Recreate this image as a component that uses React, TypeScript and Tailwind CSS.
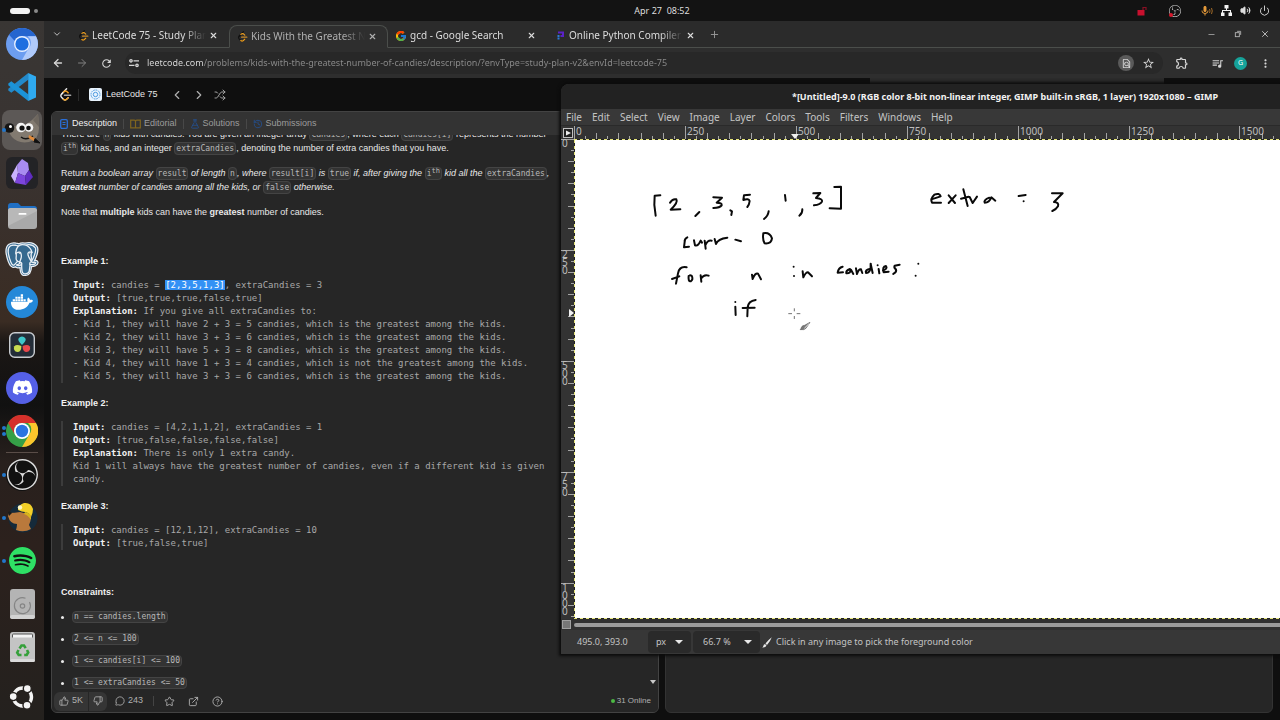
import React from 'react';
import {
    ArrowLeft, ArrowRight, ChevronDown, ChevronLeft, ChevronRight, CircleHelp, ExternalLink, FlaskConical,
    History, MessageCircle, Minus, Plus, Power, Shuffle, Star, ThumbsDown, ThumbsUp, Volume2, X,
} from 'lucide-react';
import { FaDiscord, FaDocker } from 'react-icons/fa';
import { FcGoogle } from 'react-icons/fc';
import { MdMic, MdOutlineExtension, MdOutlineFindInPage, MdQueueMusic, MdRefresh, MdMoreVert, MdStarBorder } from 'react-icons/md';
import { BiLogoPostgresql } from 'react-icons/bi';
import { SiObsstudio, SiSpotify } from 'react-icons/si';

const UI_FONT = "font-['Noto_Sans','Liberation_Sans',sans-serif]";
const PAGE_FONT = "font-['Liberation_Sans',Arial,sans-serif]";
const MONO_FONT = "font-['DejaVu_Sans_Mono','Liberation_Mono',monospace]";

const LeetCodeLogo = ({ size, light }: { size: number; light?: boolean }) => (
    <svg width={size} height={size} viewBox="0 0 24 24" fill="none" strokeWidth="2.6" strokeLinecap="round">
        <path d="M14 1.5 4.5 11.5" stroke={light ? '#e8e8e8' : '#111'} />
        <path d="M8 8 4.6 11.6q-2.4 2.6 0 5.4l3.6 3.8q2.9 2.6 5.8 0l3-3" stroke={light ? '#e8e8e8' : '#111'} />
        <path d="m17 9-3-2.8q-2.500-1.800-5.500 1.200M8.200 20.800q2.900 2.600 5.800 0l3-3" stroke="#f0a020" />
        <path d="M10 13.5h11.5" stroke={light ? '#a8a8a8' : '#c98a2a'} />
    </svg>
);

const ChromiumIcon = () => (
    <svg width="32" height="32" viewBox="0 0 32 32">
        <circle cx="16" cy="16" r="16" fill="#6c9df0" />
        <path d="M16 0a16 16 0 0 1 14 8.3H16A7.8 7.8 0 0 0 8.8 13L3 6.7A16 16 0 0 1 16 0Z" fill="#2565cf" />
        <path d="M30 8.3A16 16 0 0 1 16 32l6.7-12a7.8 7.8 0 0 0-1-11.7Z" fill="#b0cafa" />
        <circle cx="16" cy="16" r="8" fill="#e8f0ff" />
        <circle cx="16" cy="16" r="6.6" fill="#1f6fe0" />
    </svg>
);

const ChromeIcon = () => (
    <svg width="32" height="32" viewBox="0 0 32 32">
        <circle cx="16" cy="16" r="16" fill="#35a047" />
        <path d="M2.1 8A16 16 0 0 1 30 8H16a8 8 0 0 0-7 12Z" fill="#d5302b" />
        <path d="M30 8A16 16 0 0 1 16 32l7-12a8 8 0 0 0-1-12Z" fill="#fbc52c" />
        <circle cx="16" cy="16" r="8" fill="#fff" />
        <circle cx="16" cy="16" r="6.2" fill="#2a74e0" />
    </svg>
);

const VsCodeIcon = () => (
    <svg width="28" height="28" viewBox="0 0 28 28">
        <path d="M20.5 6.5 3.3 19.8.3 17.6v-1.8L20.3 0Z" fill="#2389ca" />
        <path d="M20.5 21.5 3.3 8.2.3 10.4v1.8L20.3 28Z" fill="#1b93d8" />
        <path d="M20.2 0 28 3.6v20.8L20.2 28Z" fill="#2faaf0" />
    </svg>
);

const GimpIcon = () => (
    <svg width="36" height="34" viewBox="0 0 36 34">
        <path d="M4 13q10 1 17-1 7-4 13-11 1 9 1 14 0 12-10 14-11 2-17-5-4-5-4-11Z" fill="#827a70" />
        <path d="M29 7q3-3 5-6 1 8 1 13Z" fill="#6d665e" />
        <circle cx="5.500" cy="15" r="4.800" fill="#151515" />
        <circle cx="17" cy="14.500" r="4.800" fill="#f4f4f4" />
        <circle cx="25" cy="14.500" r="4.300" fill="#f4f4f4" />
        <circle cx="18" cy="15" r="2.600" fill="#111" />
        <circle cx="24.500" cy="15" r="2.300" fill="#111" />
        <circle cx="6.500" cy="13.500" r="1.500" fill="#fff" />
        <path d="M17 24q5 4 12-1" stroke="#151515" strokeWidth="1.500" fill="none" />
        <path d="m25 22 7 4-1.500 2.500-6-3.500Z" fill="#e08a3a" />
        <path d="m31 25.500 5 4.500-6-1Z" fill="#111" stroke="#111" />
    </svg>
);

const ObsidianIcon = () => (
    <svg width="32" height="32" viewBox="0 0 32 32">
        <rect width="32" height="32" rx="6" fill="#232326" />
        <path d="m16 2 6 4 1 7-4 6-7-3-1-8Z" fill="#a88bf0" />
        <path d="m11 8 1 8-3 10-4-7Z" fill="#c9b2ff" />
        <path d="m12 16 7 3 1 9-11-2Z" fill="#7c45dc" />
        <path d="m23 13 4 7-7 8-1-9Z" fill="#5f2cc0" />
    </svg>
);

const FilesIcon = () => (
    <svg width="31" height="28" viewBox="0 0 31 28">
        <path d="M1 4q0-3 3-3h7l3 3h13q3 0 3 3v9H1Z" fill="#1f6fc4" />
        <rect x="1" y="6" width="29" height="21" rx="3" fill="#a9a9a9" />
        <path d="M1 24v-15q0-3 3-3h23q3 0 3 3Z" fill="#b8b8b8" />
        <rect x="11.500" y="11" width="8" height="1.800" rx="0.900" fill="#fff" />
    </svg>
);

const PostgresIcon = () => (
    <BiLogoPostgresql size={38} className="shrink-0 text-[#35698f] [paint-order:stroke]" stroke="#e8eef4" strokeWidth={1.6} />
);

const DockerIcon = () => (
    <span className="flex size-8 items-center justify-center rounded-full bg-[#2488d8] text-white">
        <FaDocker size={22} />
    </span>
);

const ResolveIcon = () => (
    <svg width="26" height="26" viewBox="0 0 26 26">
        <rect x="0.700" y="0.700" width="24.600" height="24.600" rx="5" fill="#232d38" stroke="#c8ccd0" strokeWidth="1.400" />
        <path d="M13 13Q8 8.500 9.700 6.300a4 4 0 0 1 6.600 0Q18 8.500 13 13Z" fill="#3ec6c9" />
        <path d="M12.400 14q0 6-4 6a3.800 3.800 0 0 1-3-5.800q2-2.400 7-.2Z" fill="#c9dc50" />
        <path d="M13.600 14q5-2.200 7 .2a3.800 3.800 0 0 1-3 5.800q-4 0-4-6Z" fill="#e8484c" />
    </svg>
);

const DiscordIcon = () => (
    <span className="flex size-8 items-center justify-center rounded-full bg-[#5560e6] text-white">
        <FaDiscord size={21} />
    </span>
);

const ObsIcon = () => (
    <span className="flex size-8 items-center justify-center rounded-full bg-[#111] text-[#dcdcdc]">
        <SiObsstudio size={31} />
    </span>
);

const BeaverIcon = () => (
    <svg width="32" height="32" viewBox="0 0 32 32">
        <circle cx="17" cy="16" r="14.500" fill="#152a3a" />
        <path d="M3 11q6 0 11-1l11 3q0 6-2 10 1 2 2 4-7 4-15 1 1-3 1-6-7 0-9-8Z" fill="#b9793c" />
        <path d="M2 10q2-1 4 1l-3 3Z" fill="#1c1c1c" />
        <path d="M12 8q0-5 6-7 7-1 9 6 0 4-2 8-1-4-6-5-3 0-7-2Z" fill="#f2cf28" />
        <circle cx="14" cy="5.500" r="2.200" fill="#fbf6c8" />
        <path d="M19 10q6 1 6 5v3q-3-5-7-6Z" fill="#d8b41c" />
    </svg>
);

const SpotifyIcon = () => (
    <span className="flex size-[27px] items-center justify-center rounded-full bg-[#111] text-[#2fe065]">
        <SiSpotify size={27} />
    </span>
);

const DiskIcon = () => (
    <svg width="25" height="30" viewBox="0 0 25 30">
        <rect width="25" height="30" rx="3" fill="#b4b4b4" />
        <rect y="26" width="25" height="4" rx="2" fill="#d2d2d2" />
        <path d="M19.500 13a8 8 0 1 1-4-3.700" fill="none" stroke="#858585" strokeWidth="1.200" />
        <circle cx="12.500" cy="17" r="2.200" fill="none" stroke="#858585" strokeWidth="1.200" />
    </svg>
);

const TrashIcon = () => (
    <svg width="25" height="30" viewBox="0 0 25 30">
        <rect width="25" height="30" rx="3" fill="#c4c4c4" />
        <path d="M2.500 5.500V3q0-1 1-1h18q1 0 1 1v2.500" fill="#f4f4f4" stroke="#555" strokeWidth="1" />
        <rect y="27" width="25" height="3" rx="1.500" fill="#dadada" />
        <g fill="none" stroke="#35a03a" strokeWidth="2.600">
            <path d="m9.500 16.500 2-3h2.500l1.700 2.600" />
            <path d="m17 18 1.200 2.500-1.500 2.500h-2.500" />
            <path d="M11.500 23H8.700l-1.500-2.400L8.500 18" />
        </g>
    </svg>
);

const UbuntuIcon = () => (
    <svg width="26" height="26" viewBox="0 0 26 26">
        <circle cx="13.500" cy="13" r="9" fill="none" stroke="#f4f4f4" strokeWidth="3.400" />
        <g fill="#f4f4f4" stroke="#24201d" strokeWidth="1.400">
            <circle cx="4.200" cy="12.600" r="4" />
            <circle cx="18.300" cy="4.600" r="4" />
            <circle cx="18" cy="21.300" r="4" />
        </g>
    </svg>
);

const dockApps = [
    { name: 'Chromium', icon: <ChromiumIcon />, dots: 0 },
    { name: 'Code', icon: <VsCodeIcon />, dots: 0 },
    { name: 'GIMP', icon: <GimpIcon />, dots: 1, active: true },
    { name: 'Obsidian', icon: <ObsidianIcon />, dots: 0 },
    { name: 'Files', icon: <FilesIcon />, dots: 0 },
    { name: 'PostgreSQL', icon: <PostgresIcon />, dots: 0 },
    { name: 'Docker', icon: <DockerIcon />, dots: 0 },
    { name: 'DaVinci Resolve', icon: <ResolveIcon />, dots: 0 },
    { name: 'Discord', icon: <DiscordIcon />, dots: 0 },
    { name: 'Chrome', icon: <ChromeIcon />, dots: 2 },
];

const runningApps = [
    { name: 'OBS Studio', icon: <ObsIcon />, dots: 1 },
    { name: 'DBeaver', icon: <BeaverIcon />, dots: 1 },
    { name: 'Spotify', icon: <SpotifyIcon />, dots: 1 },
    { name: 'Disk', icon: <DiskIcon />, dots: 0 },
    { name: 'Trash', icon: <TrashIcon />, dots: 0 },
];

interface DockItemProps {
    name: string;
    icon: React.ReactNode;
    dots: number;
    active?: boolean;
}

const DockItem: React.FC<DockItemProps> = ({ name, icon, dots, active }) => (
    <li className="relative flex h-[43px] items-center justify-center">
        <button aria-label={name} className={`flex size-10 items-center justify-center rounded-lg ${active ? 'bg-[#5c5856]' : ''}`}>
            {icon}
        </button>
        <span className="absolute left-0.5 flex flex-col gap-0.5">
            {Array.from({ length: dots }).map((_, i) => (
                <span key={i} className="size-1 rounded-full bg-[#2277cc]"></span>
            ))}
        </span>
    </li>
);

const Dock = () => (
    <nav className="flex w-11 shrink-0 flex-col bg-[linear-gradient(180deg,#393634_0%,#393331_20%,#3a2c23_43%,#1b1715_46%,#111_55%,#28201d_63%,#2c211d_75%,#24211e_100%)] pt-px pb-0.5">
        <ul>
            {dockApps.map(app => <DockItem key={app.name} {...app} />)}
        </ul>
        <hr className="mx-1.5 border-[#5a4d48]" />
        <ul>
            {runningApps.map(app => <DockItem key={app.name} {...app} />)}
        </ul>
        <button aria-label="Show apps" className="mt-auto flex h-[43px] items-center justify-center">
            <UbuntuIcon />
        </button>
    </nav>
);

const TopBar = () => (
    <header className="relative flex h-[21px] shrink-0 items-center justify-between bg-[#131313] px-2.5 text-[#dedede]">
        <div className="flex items-center gap-1">
            <span className="h-1.5 w-5 rounded-full bg-[#f2f2f2]"></span>
            <span className="size-1 rounded-full bg-[#8a8a8a]"></span>
        </div>
        <time className="absolute inset-x-0 pl-11 text-center text-[9px] whitespace-pre">Apr 27  08:52</time>
        <div className="flex items-center gap-2">
            <svg width="10" height="10" viewBox="0 0 10 10" className="mr-3.5">
                <rect x="0.500" y="4" width="7" height="5.500" fill="#c8102e" />
                <path d="M6 4V1.500h3V4" fill="none" stroke="#8a1024" strokeWidth="1.200" />
            </svg>
            <span className="relative mr-2.5">
                <SiObsstudio size={12} />
                <span className="absolute bottom-0 left-0 size-1 rounded-full bg-[#d8182c]"></span>
            </span>
            <span className="flex items-center text-[#e59a3a]">
                <MdMic size={12} />
                <svg width="4" height="8" viewBox="0 0 4 8" className="-ml-0.5" fill="none" stroke="#a06a28">
                    <path d="M.5 2q1 2 0 4M2.500 1q1.500 3 0 6" />
                </svg>
            </span>
            <svg width="11" height="11" viewBox="0 0 11 11" fill="#f2f2f2">
                <path d="M3.500 0h4v3.500H6V5h4v2.500h1V11H7.500V7.500H9V6H2v1.500h1.500V11H0V7.500h1V5h4V3.500H3.500Z" />
            </svg>
            <Volume2 size={11} fill="currentColor" />
            <Power size={11} />
        </div>
    </header>
);

const tabs = [
    { title: 'LeetCode 75 - Study Plan', icon: <LeetCodeLogo size={11} /> },
    { title: 'Kids With the Greatest N', icon: <LeetCodeLogo size={11} />, active: true },
    { title: 'gcd - Google Search', icon: <FcGoogle size={12} /> },
    {
        title: 'Online Python Compiler',
        icon: (
            <svg width="10" height="10" viewBox="0 0 10 10" fill="none" strokeWidth="2">
                <path d="M3 1.500h5v3.500H5.500" stroke="#5b21c8" />
                <path d="M3.500 4v5" stroke="#2a7ad8" strokeDasharray="2 0.500" />
            </svg>
        ),
    },
];

const TabStrip = () => (
    <div className="flex h-[27px] shrink-0 items-end border-b border-[#4b4e4b] bg-[#2b2b2b] text-[10px] text-[#dcdcdc]">
        <button aria-label="Search tabs" className="flex h-[26px] w-[26px] items-center justify-center">
            <ChevronDown size={10} />
        </button>
        {tabs.map(tab => (
            <div
                key={tab.title}
                className={`flex h-[23px] w-[159px] items-center gap-[3px] rounded-t-lg border pr-2.5 pl-1.5 ${tab.active ? '-mb-px border-[#4b4e4b] border-b-[#2e2e2e] bg-[#2e2e2e] text-[#b0b0b0]' : 'border-transparent'}`}
            >
                <span className="flex w-3 shrink-0 justify-center">{tab.icon}</span>
                <span className="flex-1 overflow-hidden whitespace-nowrap [mask-image:linear-gradient(90deg,#000_80%,transparent)]">{tab.title}</span>
                <button aria-label="Close tab">
                    <X size={9} strokeWidth={3} />
                </button>
            </div>
        ))}
        <button aria-label="New tab" className="ml-[3px] flex h-[26px] items-center">
            <Plus size={11} className="text-[#9a9a9a]" />
        </button>
        <div className="ml-auto flex h-[26px] items-center gap-[18px] pr-2.5 text-[#b4b4b4]">
            <button aria-label="Minimize"><Minus size={9} /></button>
            <button aria-label="Restore">
                <svg width="8" height="8" viewBox="0 0 9 9" fill="none" stroke="currentColor">
                    <rect x="1.500" y="3" width="4.500" height="4.500" />
                    <path d="M3.500 1.500h4v4" />
                </svg>
            </button>
            <button aria-label="Close"><X size={10} strokeWidth={2.4} /></button>
        </div>
    </div>
);

const Toolbar = () => (
    <div className="flex h-[30px] shrink-0 items-center gap-3 bg-[#2e2e2e] pr-2 pl-2 text-[#d6d6d6]">
        <button aria-label="Back"><ArrowLeft size={12} strokeWidth={2.6} /></button>
        <button aria-label="Forward"><ArrowRight size={12} className="text-[#808080]" /></button>
        <button aria-label="Reload"><MdRefresh size={13} /></button>
        <div className="flex h-[22px] flex-1 items-center rounded-full bg-[#282828] pr-1 pl-1">
            <svg width="10" height="10" viewBox="0 0 10 10" fill="none" stroke="currentColor" strokeWidth="1.300">
                <circle cx="2" cy="2.800" r="1.200" />
                <path d="M4.500 2.800H10M0 7.300h5.500" />
                <circle cx="8" cy="7.300" r="1.200" />
            </svg>
            <input
                aria-label="Address"
                readOnly
                value="leetcode.com/problems/kids-with-the-greatest-number-of-candies/description/?envType=study-plan-v2&envId=leetcode-75"
                className="ml-2 min-w-0 flex-1 bg-[linear-gradient(90deg,#e0e0e0_57px,#8c8c8c_57px)] bg-clip-text text-[9px] text-transparent outline-none"
            />
            <span className="flex size-4 items-center justify-center rounded-full bg-[#5a5a5a]">
                <MdOutlineFindInPage size={11} />
            </span>
            <button aria-label="Bookmark" className="mr-1 ml-2"><MdStarBorder size={13} /></button>
        </div>
        <button aria-label="Extensions" className="mr-2.5"><MdOutlineExtension size={14} /></button>
        <button aria-label="Media controls" className="-mr-0.5"><MdQueueMusic size={13} /></button>
        <span className="flex size-[13px] items-center justify-center rounded-full bg-[#16a39a] text-[7px] text-white">G</span>
        <button aria-label="Menu"><MdMoreVert size={13} /></button>
    </div>
);

const ProblemHeader = () => (
    <div className={`flex h-[33px] shrink-0 items-center bg-[#0f0f0f] pl-[15px] text-[9px] text-[#e6e6e6] ${PAGE_FONT}`}>
        <LeetCodeLogo size={13} light />
        <span className="ml-1.5 h-3 w-px bg-[#2a2a2a]"></span>
        <span className="ml-2.5 flex size-[13px] items-center justify-center rounded-xs bg-[#e8f3fd]">
            <svg width="11" height="11" viewBox="0 0 11 11" fill="none" stroke="#4d9be0">
                <circle cx="5.500" cy="5.500" r="4.500" strokeDasharray="1.500 0.800" />
                <circle cx="5.500" cy="5.500" r="2.200" />
            </svg>
        </span>
        <span className="ml-1">LeetCode 75</span>
        <button aria-label="Previous" className="ml-3 text-[#b0b0b0]"><ChevronLeft size={14} /></button>
        <button aria-label="Next" className="ml-2 text-[#b0b0b0]"><ChevronRight size={14} /></button>
        <button aria-label="Random" className="ml-2 text-[#a0a0a0]"><Shuffle size={12} /></button>
        <span className="mr-[116px] ml-auto h-[6px] w-[294px] self-start bg-[#2b2b2b]"></span>
    </div>
);

const Code: React.FC<{ children: React.ReactNode }> = ({ children }) => (
    <code className={`rounded-sm border border-[#444] bg-[#333] px-px py-px text-[8px] leading-none text-[#b8b8b8] not-italic ${MONO_FONT}`}>
        {children}
    </code>
);

const Example: React.FC<{ title: string; children: React.ReactNode }> = ({ title, children }) => (
    <section>
        <h3 className="font-bold text-[#f2f2f2]">{title}</h3>
        <pre className={`mt-[11px] mb-[13px] border-l-2 border-[#3c3c3c] pl-2.5 text-[9px] leading-[13px] text-[#a8a8a8] [&_b]:text-[#f0f0f0] ${MONO_FONT}`}>
            {children}
        </pre>
    </section>
);

const IthKid = () => <Code>i<sup className="text-[7px]">th</sup></Code>;

const constraints = ['n == candies.length', '2 <= n <= 100', '1 <= candies[i] <= 100', '1 <= extraCandies <= 50'];

const Description = () => (
    <section className={`relative flex min-w-0 flex-col overflow-hidden rounded-md border border-[#434343] bg-[#262626] text-[#e8e8e8] ${PAGE_FONT}`}>
        <div className="flex h-[23px] shrink-0 items-center bg-[#333] pl-2 text-[9px] text-[#9c9c9c]">
            <button className="flex items-center gap-1 font-medium text-[#f0f0f0]">
                <svg width="8" height="10" viewBox="0 0 8 10" fill="none" stroke="#2a6fd8">
                    <rect x="0.700" y="0.700" width="6.600" height="8.600" rx="1.200" strokeWidth="1.300" />
                    <path d="M2.500 3.500h3M2.500 5.500h3" />
                </svg>
                Description
            </button>
            <span className="mx-1.5 h-2.5 w-px bg-[#484848]"></span>
            <button className="flex items-center gap-[3px]">
                <svg width="11" height="10" viewBox="0 0 11 10" fill="none" stroke="#80651f" strokeWidth="1.200">
                    <path d="M.7 1.200h3.500q1.300 0 1.300 1.300v6.300H.7Zm9.600 0H6.800q-1.300 0-1.300 1.300v6.300h4.800Z" />
                </svg>
                Editorial
            </button>
            <span className="mx-1.5 h-2.5 w-px bg-[#484848]"></span>
            <button className="flex items-center gap-[3px]"><FlaskConical size={10} className="text-[#245093]" />Solutions</button>
            <span className="mx-1.5 h-2.5 w-px bg-[#484848]"></span>
            <button className="flex items-center gap-[3px]"><History size={10} className="text-[#245093]" />Submissions</button>
        </div>

        <div className="min-h-0 flex-1 overflow-hidden pl-[9px] text-[9px] leading-[14px] whitespace-nowrap">
            <p className="-mt-2">
                There are <Code>n</Code> kids with candies. You are given an integer array <Code>candies</Code>, where each <Code>candies[i]</Code> represents the number<br />
                <IthKid /> kid has, and an integer <Code>extraCandies</Code>, denoting the number of extra candies that you have.
            </p>
            <p className="mt-[11px]">
                Return <i>a boolean array</i> <Code>result</Code> <i>of length</i> <Code>n</Code><i>, where</i> <Code>result[i]</Code> <i>is</i> <Code>true</Code> <i>if, after giving the</i> <IthKid /> <i>kid all the</i> <Code>extraCandies</Code><i>,</i><br />
                <i><b>greatest</b> number of candies among all the kids, or</i> <Code>false</Code> <i>otherwise.</i>
            </p>
            <p className="mt-[11px] mb-[35px]">
                Note that <b>multiple</b> kids can have the <b>greatest</b> number of candies.
            </p>

            <Example title="Example 1:">
                <b>Input:</b> candies = <span className="bg-[#3391f5] text-white">[2,3,5,1,3]</span>, extraCandies = 3{'\n'}
                <b>Output:</b> [true,true,true,false,true]{'\n'}
                <b>Explanation:</b> If you give all extraCandies to:{'\n'}
                - Kid 1, they will have 2 + 3 = 5 candies, which is the greatest among the kids.{'\n'}
                - Kid 2, they will have 3 + 3 = 6 candies, which is the greatest among the kids.{'\n'}
                - Kid 3, they will have 5 + 3 = 8 candies, which is the greatest among the kids.{'\n'}
                - Kid 4, they will have 1 + 3 = 4 candies, which is not the greatest among the kids.{'\n'}
                - Kid 5, they will have 3 + 3 = 6 candies, which is the greatest among the kids.
            </Example>
            <Example title="Example 2:">
                <b>Input:</b> candies = [4,2,1,1,2], extraCandies = 1{'\n'}
                <b>Output:</b> [true,false,false,false,false]{'\n'}
                <b>Explanation:</b> There is only 1 extra candy.{'\n'}
                Kid 1 will always have the greatest number of candies, even if a different kid is given{'\n'}
                candy.
            </Example>
            <Example title="Example 3:">
                <b>Input:</b> candies = [12,1,12], extraCandies = 10{'\n'}
                <b>Output:</b> [true,false,true]
            </Example>

            <h3 className="mt-[35px] mb-[7px] font-bold text-[#f2f2f2]">Constraints:</h3>
            <ul>
                {constraints.map(item => (
                    <li key={item} className="flex h-[22px] items-center gap-2">
                        <span className="size-[3px] rounded-full bg-[#e8e8e8]"></span>
                        <Code>{item}</Code>
                    </li>
                ))}
            </ul>
        </div>

        <div className="absolute inset-x-0 bottom-0 flex h-[22px] items-center bg-[#262626] pl-0.5 text-[9px] text-[#b0b0b0]">
            <div className="flex h-[19px] gap-px">
                <button className="flex items-center gap-[3px] rounded-l-md bg-[#353535] px-[5px]"><ThumbsUp size={10} />5K</button>
                <button aria-label="Dislike" className="rounded-r-md bg-[#353535] px-1"><ThumbsDown size={10} /></button>
            </div>
            <button className="ml-2 flex items-center gap-[3px]"><MessageCircle size={10} />243</button>
            <span className="mx-2.5 h-2.5 w-px bg-[#444]"></span>
            <button aria-label="Favorite"><Star size={11} /></button>
            <button aria-label="Share" className="ml-[13px]"><ExternalLink size={11} /></button>
            <button aria-label="Help" className="ml-[13px]"><CircleHelp size={11} /></button>
            <span className="mr-[7px] ml-auto flex items-center gap-0.5 text-[8px]">
                <span className="size-1 rounded-full bg-[#4cb944]"></span>
                31 Online
            </span>
        </div>
        <svg width="6" height="4" viewBox="0 0 6 4" className="absolute right-0.5 bottom-7" fill="#c8c8c8"><path d="M0 0h6L3 4Z" /></svg>
    </section>
);

const TICK = 11.09;
const ticks = Array.from({ length: 77 }, (_, i) => i);
const tickLength = (i: number) => (i % 10 === 0 ? 13 : i % 2 === 0 ? 6 : 3);

const TopRuler = () => (
    <svg className="h-[13px] min-w-0 flex-1 overflow-hidden bg-[#333]" fontSize="10" fill="#bdbdbd">
        {ticks.map(i => (
            <rect key={i} x={Math.round(i * TICK)} y={13 - tickLength(i)} width="1" height={tickLength(i)} fill="#a4a4a4" />
        ))}
        {ticks.filter(i => i % 10 === 0 && i <= 60).map(i => (
            <text key={i} x={Math.round(i * TICK) + 2} y="9">{i * 25}</text>
        ))}
        <path d="M217 8h8l-4 5Z" fill="#f0f0f0" />
    </svg>
);

const SideRuler = () => (
    <svg className="w-[13px] shrink-0 overflow-hidden bg-[#333]" fontSize="10" fill="#bdbdbd">
        {ticks.slice(0, 44).map(i => (
            <rect key={i} x={13 - tickLength(i)} y={Math.round(i * TICK)} width={tickLength(i)} height="1" fill="#a4a4a4" />
        ))}
        {ticks.slice(0, 44).filter(i => i % 10 === 0).map(i => (
            String(i * 25).split('').map((digit, d) => (
                <text key={`${i}-${d}`} x="1" y={Math.round(i * TICK) + 8 + d * 8}>{digit}</text>
            ))
        ))}
        <path d="M8 170v8l5-4Z" fill="#f0f0f0" />
    </svg>
);

// Pen strokes, three units to one canvas pixel
const inkLeft = [
    'M61 76 44 77 43 105 47 137',
    'M90 98Q98 85 109 88 115 98 92 119L121 118',
    'M178 126 166 138',
    'M220 82 246 83 230 98Q247 98 245 106 240 113 220 114',
    'M271 121 276 124 274 135',
    'M330 74 312 76 310 90Q326 84 329 93 328 104 322 111',
    'M386 124Q384 138 372 147',
    'M435 75 437 92',
    'M487 118Q488 129 478 137',
    'M520 70 541 69 528 84Q549 86 546 95 542 104 522 106',
    'M583 51 603 50 603 116 569 115',
    'M142 202Q133 206 134 216L132 232 147 230',
    'M162 211 165 226Q174 230 182 212L186 218',
    'M194 212 197 236M197 224Q203 210 215 212',
    'M224 207 228 222Q234 206 262 203',
    'M286 209 303 214',
    'M370 190Q389 186 396 205 394 222 374 220 367 210 370 190',
    'M140 292Q118 288 114 310L108 341M96 327 118 319',
    'M146 318Q144 335 152 334 161 328 155 317L150 316',
    'M182 316 184 335M184 325Q192 312 206 317',
    'M336 314 338 327Q346 307 354 311L363 328',
    'M488 304 490 322Q497 307 504 307L516 319',
    'M608 290Q595 293 593 308L609 307',
    'M630 297Q617 302 619 310 631 311 633 299L640 312',
    'M648 295 651 312Q657 296 663 298L667 309',
    'M692 296Q674 299 678 309 694 309 692 281L698 309',
    'M716 297 718 310',
    'M729 302Q744 296 738 288 726 290 731 307L746 305',
    'M779 284 764 287Q761 294 768 298 771 306 760 312',
    'M286 410 287 435',
    'M347 390Q325 393 323 412L322 439M308 414 344 413',
];

const inkDots = [[461, 290], [462, 318], [713, 286], [835, 281], [827, 317], [286, 396], [1151, 94]];

const inkRight = [
    'M94 88 122 79Q118 68 103 74 90 86 96 98L123 98',
    'M146 76 165 99M167 76 146 99',
    'M190 58 203 108M183 86 206 80',
    'M209 81 218 99 231 80',
    'M268 83Q250 90 254 98 268 98 274 82L286 92',
    'M356 78 377 75',
    'M456 70 488 70 462 96Q478 97 474 109 469 118 457 123',
];

const Sketch = () => (
    <svg width="706" height="478" viewBox="574 140 706 478" className="block max-w-none" fill="none" stroke="#0a0a0a" strokeWidth="6" strokeLinecap="round" strokeLinejoin="round">
        <g transform="translate(640 170) scale(0.3333)">
            {inkLeft.map(d => <path key={d} d={d} />)}
            {inkDots.map(([x, y]) => <circle key={`${x}-${y}`} cx={x} cy={y} r="3" fill="#0a0a0a" stroke="none" />)}
            <path d="M463 415v9m0 14v9M445 431h11m14 0h11" stroke="#555" strokeWidth="2.500" strokeLinecap="butt" />
            <path d="M482 479q2-13 12-13l16-9-12 18q-6 6-16 4Z" fill="#777" stroke="#666" strokeWidth="2" />
            <path d="m494 474 12-12" stroke="#eee" strokeWidth="3" />
        </g>
        <g transform="translate(900 170) scale(0.3333)">
            {inkRight.map(d => <path key={d} d={d} />)}
        </g>
    </svg>
);

const menus = ['File', 'Edit', 'Select', 'View', 'Image', 'Layer', 'Colors', 'Tools', 'Filters', 'Windows', 'Help'];

const GimpWindow = () => (
    <section className="absolute top-[84px] right-0 bottom-[66px] left-[561px] flex flex-col overflow-hidden rounded-tl-lg bg-[#353535] text-[#c4c4c4] shadow-[0_0_3px_2px_#0c0c0c]">
        <h1 className="flex h-[25px] shrink-0 items-center justify-end bg-[#222] pr-[62px] text-[9px] font-bold whitespace-nowrap text-[#f2f2f2]">
            *[Untitled]-9.0 (RGB color 8-bit non-linear integer, GIMP built-in sRGB, 1 layer) 1920x1080 – GIMP
        </h1>
        <nav className="flex h-[17px] shrink-0 items-center gap-2.5 border-b border-[#2a2a2a] bg-[#383838] pl-[5px] text-[10px]">
            {menus.map(menu => <button key={menu}>{menu}</button>)}
        </nav>
        <div className="flex h-[13px] shrink-0">
            <button aria-label="Image menu" className="flex w-[13px] shrink-0 items-center justify-center">
                <svg width="10" height="10" viewBox="0 0 10 10">
                    <rect x="0.500" y="0.500" width="9" height="9" fill="#222" stroke="#c0c0c0" />
                    <path d="m3 2.500 5 2.500-5 2.500Z" fill="#eee" />
                </svg>
            </button>
            <TopRuler />
        </div>
        <div className="flex min-h-0 flex-1">
            <SideRuler />
            <div className="flex min-w-0 flex-1 flex-col bg-white">
                <div className="h-px shrink-0 bg-[repeating-linear-gradient(90deg,#e6e67a_0_3px,#222_3px_6px)]"></div>
                <div className="relative min-h-0 flex-1 overflow-hidden">
                    <div className="absolute inset-y-0 left-0 w-px bg-[repeating-linear-gradient(180deg,#e6e67a_0_3px,#222_3px_6px)]"></div>
                    <Sketch />
                </div>
                <div className="h-px shrink-0 bg-[repeating-linear-gradient(90deg,#e6e67a_0_3px,#222_3px_6px)]"></div>
            </div>
        </div>
        <div className="flex h-[11px] shrink-0 items-center gap-[3px] bg-[#303030] pl-px">
            <span className="size-[9px] border border-[#a0a0a0] bg-[#777]"></span>
            <span className="h-1 flex-1 rounded-l-full bg-[#9a9a9a]"></span>
        </div>
        <footer className="flex h-6 shrink-0 items-center bg-[#373737] text-[9px]">
            <span className="w-[87px] pl-4">495.0, 393.0</span>
            <div className="relative flex h-[22px] items-center">
                <select aria-label="Unit" className="h-full w-[43px] appearance-none rounded-sm bg-[#2a2a2a] pl-2">
                    <option>px</option>
                </select>
                <svg width="8" height="4" viewBox="0 0 8 4" className="pointer-events-none absolute right-2" fill="#e8e8e8"><path d="M0 0h8L4 4Z" /></svg>
            </div>
            <div className="relative ml-0.5 flex h-[22px] items-center">
                <select aria-label="Zoom" className="h-full w-[67px] appearance-none rounded-sm bg-[#2a2a2a] pl-2.5">
                    <option>66.7 %</option>
                </select>
                <svg width="8" height="4" viewBox="0 0 8 4" className="pointer-events-none absolute right-2" fill="#e8e8e8"><path d="M0 0h8L4 4Z" /></svg>
            </div>
            <svg width="10" height="11" viewBox="0 0 10 11" className="ml-0.5" fill="#e8e8e8">
                <path d="M9.800.2Q6 3 3.500 6.500L5 8Q8.500 4 9.800.2ZM3 7q-1.500.3-1.700 2-.2 1-1.200 1.500Q3.500 11 4.500 8.500Z" />
            </svg>
            <span className="ml-1">Click in any image to pick the foreground color</span>
        </footer>
    </section>
);

const App: React.FC = () => (
    <div className={`relative flex h-screen flex-col overflow-hidden bg-[#0f0f0f] ${UI_FONT}`}>
        <TopBar />
        <div className="flex min-h-0 flex-1">
            <Dock />
            <main className="flex min-w-0 flex-1 flex-col">
                <TabStrip />
                <Toolbar />
                <ProblemHeader />
                <div className="grid min-h-0 flex-1 grid-cols-2 gap-1.5 px-[7px] pb-[7px]">
                    <Description />
                    <section className="rounded-md border border-[#333] bg-[#262626]"></section>
                </div>
            </main>
        </div>
        <GimpWindow />
    </div>
);

export default App;
